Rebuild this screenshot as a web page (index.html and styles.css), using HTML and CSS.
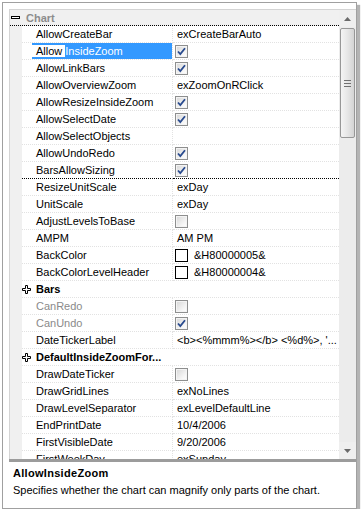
FILE: index.html
```html
<!DOCTYPE html>
<html lang="en">
<head>
  <meta charset="UTF-8">
  <meta name="viewport" content="width=device-width, initial-scale=1.0">
  <title>Chart properties</title>
  <link rel="stylesheet" href="styles.css">
</head>
<body>
  <div class="window">
    <div class="grid">
      <div class="rows">
        <!-- category header -->
        <div class="cat-head">
          <svg class="tree-icon" width="9" height="9" viewBox="0 0 9 9"><rect x="0.5" y="3.5" width="8" height="2" fill="#fff" stroke="#000"/></svg>
          <span>Chart</span>
        </div>

        <div class="row"><span class="gutter"></span><span class="name">AllowCreateBar</span><span class="value">exCreateBarAuto</span></div>
        <div class="row sel"><span class="gutter"></span><span class="name"><span class="hl"><span class="match">Allow</span>InsideZoom</span></span><span class="value"><span class="check on"></span></span></div>
        <div class="row"><span class="gutter"></span><span class="name">AllowLinkBars</span><span class="value"><span class="check on"></span></span></div>
        <div class="row"><span class="gutter"></span><span class="name">AllowOverviewZoom</span><span class="value">exZoomOnRClick</span></div>
        <div class="row"><span class="gutter"></span><span class="name">AllowResizeInsideZoom</span><span class="value"><span class="check on"></span></span></div>
        <div class="row"><span class="gutter"></span><span class="name">AllowSelectDate</span><span class="value"><span class="check on"></span></span></div>
        <div class="row"><span class="gutter"></span><span class="name">AllowSelectObjects</span><span class="value"></span></div>
        <div class="row"><span class="gutter"></span><span class="name">AllowUndoRedo</span><span class="value"><span class="check on"></span></span></div>
        <div class="row group-end"><span class="gutter"></span><span class="name">BarsAllowSizing</span><span class="value"><span class="check on"></span></span></div>

        <div class="row"><span class="gutter"></span><span class="name">ResizeUnitScale</span><span class="value">exDay</span></div>
        <div class="row"><span class="gutter"></span><span class="name">UnitScale</span><span class="value">exDay</span></div>
        <div class="row"><span class="gutter"></span><span class="name">AdjustLevelsToBase</span><span class="value"><span class="check"></span></span></div>
        <div class="row"><span class="gutter"></span><span class="name">AMPM</span><span class="value">AM PM</span></div>
        <div class="row"><span class="gutter"></span><span class="name">BackColor</span><span class="value"><span class="swatch"></span>&amp;H80000005&amp;</span></div>
        <div class="row"><span class="gutter"></span><span class="name">BackColorLevelHeader</span><span class="value"><span class="swatch"></span>&amp;H80000004&amp;</span></div>
        <div class="row"><span class="gutter"></span><span class="cat">
          <svg class="tree-icon" width="9" height="9" viewBox="0 0 9 9"><polygon points="3.5,0.5 5.5,0.5 5.5,3.5 8.5,3.5 8.5,5.5 5.5,5.5 5.5,8.5 3.5,8.5 3.5,5.5 0.5,5.5 0.5,3.5 3.5,3.5" fill="#fff" stroke="#000"/></svg>Bars</span></div>
        <div class="row disabled"><span class="gutter"></span><span class="name">CanRedo</span><span class="value"><span class="check"></span></span></div>
        <div class="row disabled"><span class="gutter"></span><span class="name">CanUndo</span><span class="value"><span class="check on"></span></span></div>
        <div class="row"><span class="gutter"></span><span class="name">DateTickerLabel</span><span class="value">&lt;b&gt;&lt;%mmm%&gt;&lt;/b&gt; &lt;%d%&gt;, '...</span></div>
        <div class="row"><span class="gutter"></span><span class="cat">
          <svg class="tree-icon" width="9" height="9" viewBox="0 0 9 9"><polygon points="3.5,0.5 5.5,0.5 5.5,3.5 8.5,3.5 8.5,5.5 5.5,5.5 5.5,8.5 3.5,8.5 3.5,5.5 0.5,5.5 0.5,3.5 3.5,3.5" fill="#fff" stroke="#000"/></svg>DefaultInsideZoomFor...</span></div>
        <div class="row"><span class="gutter"></span><span class="name">DrawDateTicker</span><span class="value"><span class="check"></span></span></div>
        <div class="row"><span class="gutter"></span><span class="name">DrawGridLines</span><span class="value">exNoLines</span></div>
        <div class="row"><span class="gutter"></span><span class="name">DrawLevelSeparator</span><span class="value">exLevelDefaultLine</span></div>
        <div class="row"><span class="gutter"></span><span class="name">EndPrintDate</span><span class="value">10/4/2006</span></div>
        <div class="row"><span class="gutter"></span><span class="name">FirstVisibleDate</span><span class="value">9/20/2006</span></div>
        <div class="row"><span class="gutter"></span><span class="name">FirstWeekDay</span><span class="value">exSunday</span></div>
      </div>

      <!-- vertical scroll bar -->
      <div class="vscroll">
        <div class="sb-btn"><svg width="7" height="4" viewBox="0 0 7 4"><polygon points="3.5,0 7,4 0,4" fill="#6a6a6a"/></svg></div>
        <div class="sb-track">
          <div class="sb-thumb"><span class="grip"></span></div>
        </div>
        <div class="sb-btn"><svg width="7" height="4" viewBox="0 0 7 4"><polygon points="0,0 7,0 3.5,4" fill="#6a6a6a"/></svg></div>
      </div>
    </div>

    <div class="splitter"></div>

    <div class="desc">
      <div class="desc-title">AllowInsideZoom</div>
      <div>Specifies whether the chart can magnify only parts of the chart.</div>
    </div>
  </div>
</body>
</html>
```

FILE: styles.css
```css
body {
  margin: 0;
  font-family: 'Liberation Sans', Arial, sans-serif;
  font-size: 11px;
  color: #000;
  background-color: #fff;
}
.window {
  margin: 2px 0 0 2px;
  width: 355px;
  height: 507px;
  box-sizing: border-box;
  border: 1px solid #a0a0a0;
  box-shadow: 3px 3px 1px #b4b4b4;
  padding: 6px 0 0 6px;
  display: flex;
  flex-direction: column;
  background-color: #fff;
}
.grid {
  height: 450px;
  box-sizing: border-box;
  border-top: 1px solid #d4d4d4;
  border-left: 1px solid #d4d4d4;
  display: flex;
}
.rows {
  flex: 1;
  overflow: hidden;
}
.cat-head {
  height: 16px;
  box-sizing: border-box;
  border-bottom: 1px dotted #000;
  background-color: #f0f0f0;
  display: flex;
  align-items: center;
  padding-left: 1px;
  font-weight: bold;
  color: #8c8c8c;
}
.cat-head .tree-icon {
  margin-right: 6px;
}
.row {
  height: 17px;
  display: flex;
  line-height: 16px;
  white-space: nowrap;
}
.gutter {
  width: 12px;
  flex: none;
  background-color: #f0f0f0;
}
.name, .value, .cat {
  box-sizing: border-box;
  border-bottom: 1px dotted #e2e2e2;
}
.name {
  width: 151px;
  flex: none;
  padding-left: 14px;
  border-right: 1px dotted #e2e2e2;
  overflow: hidden;
}
.value {
  flex: 1;
  padding-left: 4px;
  display: flex;
  align-items: center;
  overflow: hidden;
}
.cat {
  flex: 1;
  display: flex;
  align-items: center;
  font-weight: bold;
}
.cat .tree-icon {
  margin-right: 5px;
}
.group-end .name, .group-end .value {
  border-bottom: 1px dotted #000;
}
.disabled .name {
  color: #8a8a8a;
}

/* selected row with incremental search match */
.sel .name {
  padding-left: 10px;
  display: flex;
}
.hl {
  flex: 1;
  background-color: #3399ff;
  color: #fff;
}
.match {
  background-color: #fff;
  color: #000;
  padding: 0 3px 0 4px;
}

.check {
  width: 13px;
  height: 13px;
  margin-left: -2px;
  box-sizing: border-box;
  border: 1px solid #8e8f8f;
  background: linear-gradient(135deg, #d6d6d6, #f6f6f6 70%, #fff);
  box-shadow: inset 0 0 0 1px #f4f4f4;
}
.check.on {
  background-image: url("data:image/svg+xml,%3Csvg xmlns='http://www.w3.org/2000/svg' width='11' height='11'%3E%3Cpath d='M2 5.5 L4.3 8 L9 2.2' fill='none' stroke='%23284a8e' stroke-width='1.8'/%3E%3C/svg%3E"), linear-gradient(135deg, #d6d6d6, #f6f6f6 70%, #fff);
}
.swatch {
  width: 13px;
  height: 13px;
  margin-left: -2px;
  margin-right: 6px;
  box-sizing: border-box;
  border: 1px solid #000;
  background-color: #fff;
}

.vscroll {
  width: 17px;
  flex: none;
  display: flex;
  flex-direction: column;
  background-color: #ececec;
}
.sb-btn {
  height: 17px;
  display: flex;
  align-items: center;
  justify-content: center;
  background-color: #efefef;
}
.sb-track {
  flex: 1;
}
.sb-thumb {
  margin: 1px 1px 0 1px;
  height: 110px;
  box-sizing: border-box;
  border: 1px solid #979797;
  border-radius: 2px;
  background: linear-gradient(to right, #f4f4f4, #e6e6e6 50%, #d4d4d4);
  display: flex;
  align-items: center;
  justify-content: center;
}
.grip {
  width: 7px;
  height: 7px;
  background: repeating-linear-gradient(to bottom, #707070 0, #707070 1px, transparent 1px, transparent 3px);
}

.splitter {
  height: 3px;
  background-color: #9c9c9c;
}
.desc {
  flex: 1;
  padding: 5px 4px 0 4px;
  line-height: 13px;
}
.desc-title {
  font-weight: bold;
  letter-spacing: 0.3px;
  margin-bottom: 4px;
}
```
